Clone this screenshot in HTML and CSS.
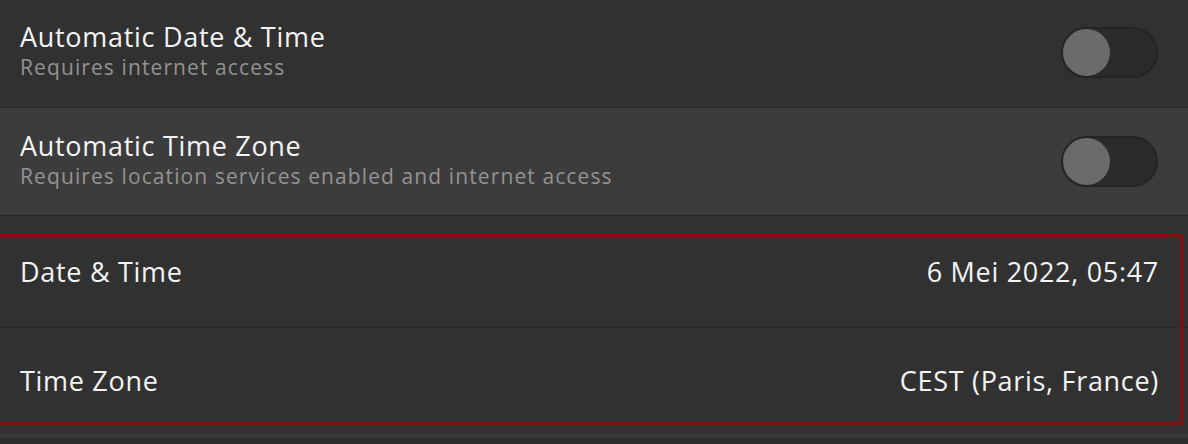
FILE: index.html
```html
<!DOCTYPE html>
<html>
<head>
<meta charset="utf-8">
<link rel="stylesheet" href="styles.css">
</head>
<body>
<div class="page">
  <div class="list">
    <div class="row row-a">
      <div class="text">
        <div class="title">Automatic Date &amp; Time</div>
        <div class="subtitle">Requires internet access</div>
      </div>
      <div class="switch"><div class="knob"></div></div>
    </div>
    <div class="row hover">
      <div class="text">
        <div class="title">Automatic Time Zone</div>
        <div class="subtitle">Requires location services enabled and internet access</div>
      </div>
      <div class="switch"><div class="knob"></div></div>
    </div>
    <div class="row plain row-c">
      <div class="title">Date &amp; Time</div>
      <div class="value">6 Mei 2022, 05:47</div>
    </div>
    <div class="row plain row-d">
      <div class="title">Time Zone</div>
      <div class="value">CEST (Paris, France)</div>
    </div>
  </div>
  <div class="edge"></div>
  <div class="highlight"></div>
</div>
</body>
</html>
```

FILE: styles.css
```css
html, body {
  margin: 0;
  padding: 0;
  background: #161616;
}
.page {
  position: relative;
  width: 1188px;
  height: 444px;
  overflow: hidden;
  background: #2e2e2e;
  font-family: "Open Sans", "Noto Sans", sans-serif;
  color: #f2f2f2;
  display: flex;
  flex-direction: column;
}
.list {
  display: flex;
  flex-direction: column;
}
.row {
  display: flex;
  align-items: center;
  justify-content: space-between;
  padding: 0 29px 0 20px;
  background: #313131;
  border-bottom: 1px solid #292929;
  box-sizing: border-box;
  height: 108px;
}
.row.row-a {
  margin-top: -2px;
  height: 110px;
}
.row.hover {
  background: #3c3c3c;
  height: 108px;
}
.row.row-c {
  height: 112px;
}
.row.row-d {
  height: 106px;
  border-bottom: none;
}
.text {
  display: flex;
  flex-direction: column;
  padding-bottom: 4px;
}
.title {
  font-size: 27px;
  line-height: 32px;
  letter-spacing: 0.7px;
  color: #f4f4f4;
  white-space: nowrap;
}
.subtitle {
  font-size: 21px;
  line-height: 28px;
  letter-spacing: 1.1px;
  color: #939393;
  white-space: nowrap;
}
.value {
  font-size: 27px;
  line-height: 32px;
  letter-spacing: 0.7px;
  color: #f4f4f4;
  white-space: nowrap;
}
.switch {
  width: 97px;
  height: 51px;
  box-sizing: border-box;
  border-radius: 26px;
  background: #2b2b2b;
  border: 2px solid #242424;
  display: flex;
  align-items: center;
  margin-right: 1px;
}
.knob {
  width: 47px;
  height: 47px;
  border-radius: 50%;
  background: #6b6b6b;
}
.edge {
  height: 4px;
  background: #3a3a3a;
}
.highlight {
  position: absolute;
  left: -3px;
  top: 234px;
  width: 1186px;
  height: 191px;
  box-sizing: border-box;
  border: 3px solid #8b0a0a;
}
```
